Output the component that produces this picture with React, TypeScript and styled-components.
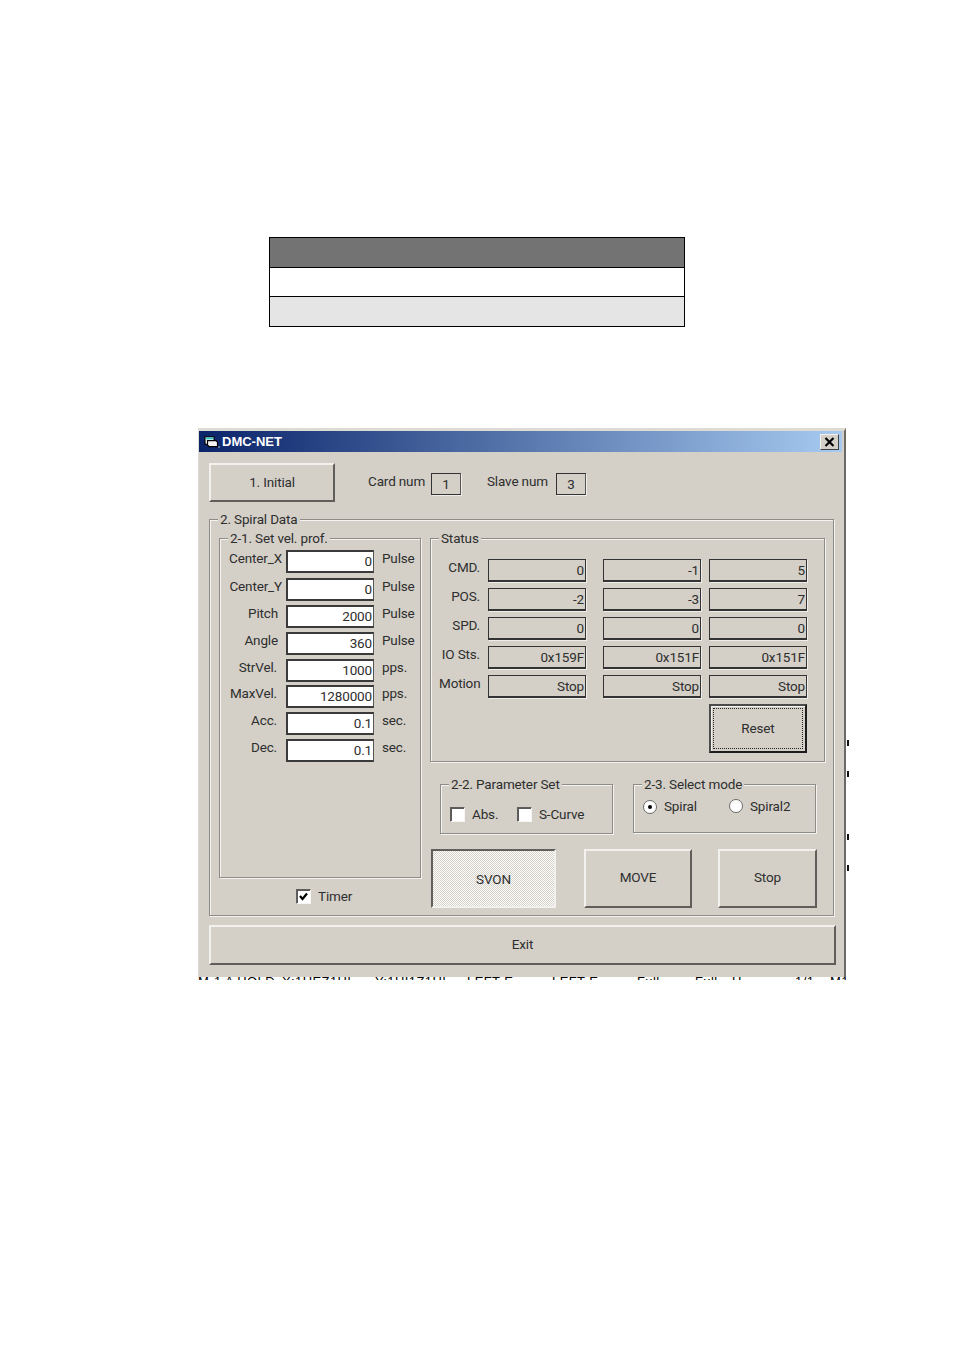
import React from "react";
import styled, {createGlobalStyle} from "styled-components";

const GlobalStyle = createGlobalStyle`
  html, body {
    margin: 0;
    padding: 0;
    background: #fff;
  }
  body {
    font-family: Roboto, "Liberation Sans", Arial, sans-serif;
    font-size: 13.5px;
    letter-spacing: -0.15px;
    color: #2e2e2e;
  }
`;

const Page = styled.div`
  width: 954px;
  height: 1350px;
  padding: 237px 0 0 198px;
  box-sizing: border-box;
  overflow: hidden;
`;

const TableBox = styled.div`
  width: 416px;
  margin-left: 71px;
  border: 1px solid #000;
  box-sizing: border-box;
  background: #fff;
`;

const TableRow = styled.div<{ $bg: string; $h: number }>`
  height: ${p => p.$h}px;
  background: ${p => p.$bg};
  & + & {
    border-top: 1px solid #000;
  }
`;

const DialogWrap = styled.div`
  position: relative;
  margin-top: 101px;
  width: 650px;
`;

const Dialog = styled.div`
  width: 648px;
  height: 549px;
  box-sizing: border-box;
  background: #d4d0c8;
  border-top: 3px solid #dedbd5;
  border-right: 2px solid #6b6a67;
  border-left: 1px solid #dedbd5;
`;

const TitleBar = styled.div`
  height: 21px;
  margin-right: 2px;
  background: linear-gradient(90deg, #0a246a, #a6caf0);
  display: flex;
  align-items: center;
  padding: 0 3px 0 5px;
  gap: 2px;
  color: #fff;
  font-family: "Liberation Sans", Arial, sans-serif;
  font-weight: bold;
  font-size: 13px;
  letter-spacing: 0;
`;

const CloseButton = styled.div`
  margin-left: auto;
  width: 19px;
  height: 16px;
  background: #d4d0c8;
  border: 1px solid;
  border-color: #f2f1ee #404040 #404040 #f2f1ee;
  box-sizing: border-box;
  display: flex;
  align-items: center;
  justify-content: center;
`;

const Content = styled.div`
  padding: 11px 0 0 10px;
`;

const TopRow = styled.div`
  display: flex;
  height: 39px;
`;

const Button = styled.div<{ $w: number; $h: number; $ml?: number; $mt?: number; $pb?: number }>`
  width: ${p => p.$w}px;
  height: ${p => p.$h}px;
  margin-left: ${p => p.$ml || 0}px;
  margin-top: ${p => p.$mt || 0}px;
  padding-bottom: ${p => p.$pb ?? 2}px;
  box-sizing: border-box;
  display: flex;
  align-items: center;
  justify-content: center;
  background: #d4d0c8;
  border-top: 2px solid #f2f1ee;
  border-left: 2px solid #f2f1ee;
  border-right: 2px solid #5f5e5b;
  border-bottom: 2px solid #5f5e5b;
`;

const ToggledButton = styled(Button)`
  border-top-color: #5f5e5b;
  border-left-color: #5f5e5b;
  border-right-color: #f2f1ee;
  border-bottom-color: #f2f1ee;
  background: repeating-conic-gradient(#fff 0 25%, #d4d0c8 0 50%) 0 0 / 2px 2px;
  padding-top: 2px;
`;

const DefaultButton = styled(Button)`
  border: 2px solid #1c1c1c;
  border-top-color: #4b4b4b;
  border-left-color: #4b4b4b;
  box-shadow: inset 1px 1px 0 #f2f1ee;
  padding: 2px;
`;

const FocusRing = styled.div`
  width: 100%;
  height: 100%;
  box-sizing: border-box;
  padding-bottom: 2px;
  border: 1px dotted #222;
  display: flex;
  align-items: center;
  justify-content: center;
`;

const InlineLabel = styled.div<{ $ml: number; $w: number }>`
  width: ${p => p.$w}px;
  margin-left: ${p => p.$ml}px;
  margin-top: 10px;
  white-space: nowrap;
`;

const ValueBox = styled.div`
  width: 30px;
  height: 22px;
  margin-top: 10px;
  box-sizing: border-box;
  border: 1px solid #333;
  border-right-color: #555;
  box-shadow: 1px 1px 0 #efeeea;
  display: flex;
  align-items: center;
  justify-content: center;
`;

const Group = styled.div<{ $w: number; $h: number; $mt?: number; $ml?: number }>`
  position: relative;
  width: ${p => p.$w}px;
  height: ${p => p.$h}px;
  margin-top: ${p => p.$mt || 0}px;
  margin-left: ${p => p.$ml || 0}px;
  box-sizing: border-box;
  border: 1px solid #8e8c87;
  box-shadow: 1px 1px 0 #f4f3f0, inset 1px 1px 0 #f4f3f0;
`;

const Legend = styled.div<{ $left: number }>`
  position: absolute;
  top: -9px;
  left: ${p => p.$left}px;
  padding: 0 2px;
  line-height: 17px;
  background: #d4d0c8;
  white-space: nowrap;
`;

const SpiralBody = styled.div`
  display: grid;
  grid-template-columns: 202px 395px;
  column-gap: 9px;
  padding: 18px 0 0 9px;
`;

const ParamGrid = styled.div`
  display: grid;
  grid-template-columns: 62px 88px auto;
  grid-template-rows: 28px 27px 27px 27px 26px 27px 27px 23px;
  column-gap: 4px;
  padding-top: 11px;
`;

const ParamLabel = styled.div<{ $pr: number }>`
  text-align: right;
  padding-right: ${p => p.$pr}px;
  line-height: 17px;
  white-space: nowrap;
`;

const Input = styled.div`
  height: 23px;
  box-sizing: border-box;
  background: #fff;
  border: 2px solid #3a3a3a;
  border-right: 1px solid #555;
  text-align: right;
  padding-right: 1px;
  line-height: 18px;
`;

const Unit = styled.div`
  padding-left: 4px;
  line-height: 17px;
`;

const TimerRow = styled.div`
  display: flex;
  align-items: center;
  gap: 7px;
  margin: 10px 0 0 77px;
`;

const CheckBox = styled.div`
  width: 15px;
  height: 15px;
  flex: none;
  box-sizing: border-box;
  background: #fff;
  border: 1px solid;
  border-color: #5f5e5b #f7f6f4 #f7f6f4 #5f5e5b;
  box-shadow: inset 1px 1px 0 #5a5a5a;
  display: flex;
  align-items: center;
  justify-content: center;
`;

const StatusGrid = styled.div`
  display: grid;
  grid-template-columns: 49px 98px 115px 106px;
  grid-template-rows: repeat(5, 29px);
  padding: 20px 0 0 8px;
`;

const StatusLabel = styled.div`
  text-align: right;
  padding-right: 8px;
  line-height: 17px;
  white-space: nowrap;
`;

const StatusBox = styled.div<{ $ml: number }>`
  height: 23px;
  width: 98px;
  box-sizing: border-box;
  margin-left: ${p => p.$ml}px;
  border: 1px solid #333;
  border-bottom-width: 2px;
  box-shadow: 1px 1px 0 #efeeea;
  text-align: right;
  padding-right: 1px;
  line-height: 21px;
`;

const ResetRow = styled.div`
  display: flex;
  justify-content: flex-end;
  padding-right: 17px;
`;

const OptionRow = styled.div`
  display: flex;
  align-items: flex-start;
  gap: 20px;
  margin: 22px 0 0 10px;
`;

const OptionLine = styled.div<{ $pt: number }>`
  display: flex;
  padding: ${p => p.$pt}px 0 0 9px;
`;

const OptionItem = styled.div<{ $w: number; $mt?: number }>`
  display: flex;
  align-items: center;
  gap: 7px;
  width: ${p => p.$w}px;
  margin-top: ${p => p.$mt || 0}px;
  line-height: 17px;
  white-space: nowrap;
`;

const Radio = styled.div<{ $on?: boolean }>`
  width: 14px;
  height: 14px;
  flex: none;
  box-sizing: border-box;
  border-radius: 50%;
  background: #fff;
  border: 1px solid #6a6a6a;
  display: flex;
  align-items: center;
  justify-content: center;
  &::after {
    content: "";
    display: ${p => (p.$on ? "block" : "none")};
    width: 4px;
    height: 4px;
    border-radius: 50%;
    background: #000;
  }
`;

const ActionRow = styled.div`
  display: flex;
  margin-top: 15px;
`;

const ClippedStrip = styled.div`
  display: flex;
  height: 3px;
  width: 650px;
  overflow: hidden;
  font-family: "Liberation Sans", Arial, sans-serif;
  font-size: 13px;
  line-height: 15px;
  letter-spacing: 0.4px;
  color: #000;
  white-space: nowrap;
`;

const StripWord = styled.span<{ $w: number }>`
  flex: none;
  width: ${p => p.$w}px;
  margin-top: -3px;
`;

const Tick = styled.div<{ $top: number }>`
  position: absolute;
  left: 649px;
  top: ${p => p.$top}px;
  width: 2px;
  height: 6px;
  background: #111;
`;

const params = [
    {label: "Center_X", pr: 0, value: "0", unit: "Pulse"},
    {label: "Center_Y", pr: 0, value: "0", unit: "Pulse"},
    {label: "Pitch", pr: 4, value: "2000", unit: "Pulse"},
    {label: "Angle", pr: 4, value: "360", unit: "Pulse"},
    {label: "StrVel.", pr: 5, value: "1000", unit: "pps."},
    {label: "MaxVel.", pr: 5, value: "1280000", unit: "pps."},
    {label: "Acc.", pr: 5, value: "0.1", unit: "sec."},
    {label: "Dec.", pr: 5, value: "0.1", unit: "sec."},
];

const status = [
    {label: "CMD.", values: ["0", "-1", "5"]},
    {label: "POS.", values: ["-2", "-3", "7"]},
    {label: "SPD.", values: ["0", "0", "0"]},
    {label: "IO Sts.", values: ["0x159F", "0x151F", "0x151F"]},
    {label: "Motion", values: ["Stop", "Stop", "Stop"]},
];

const boxOffsets = [0, 17, 8];

const stripWords = [
    {text: "M-1 A HOLD", w: 84},
    {text: "X:1HEZ1HI", w: 93},
    {text: "Y:1HI1Z1HI", w: 92},
    {text: "LEFT E", w: 85},
    {text: "LEFT E", w: 85},
    {text: "Full", w: 58},
    {text: "Full", w: 37},
    {text: "H", w: 63},
    {text: "1/1", w: 35},
    {text: "M1", w: 18},
];

const WindowIcon = () => (
    <svg width="16" height="12" viewBox="0 0 16 12">
        <rect x="1" y="0.8" width="9" height="7.5" fill="#fff" stroke="#000" strokeWidth="1.2"/>
        <rect x="1.6" y="1.4" width="7.8" height="2" fill="#35c4c4"/>
        <path d="M3.5 4.6H12L13.5 6.2V10.6H5L3.5 9z" fill="#f4f4f4" stroke="#000" strokeWidth="1.2"/>
        <path d="M14 10.5h2v1h-2z" fill="#aab4c8"/>
    </svg>
);

const CloseIcon = () => (
    <svg width="11" height="10" viewBox="0 0 11 10">
        <path d="M1.5 1L9.5 9M9.5 1L1.5 9" stroke="#000" strokeWidth="2.2"/>
    </svg>
);

const CheckIcon = () => (
    <svg width="11" height="11" viewBox="0 0 11 11">
        <path d="M2 5L4.5 8L9 2.5" fill="none" stroke="#000" strokeWidth="2.2"/>
    </svg>
);

const App: React.FC = () => {
    return (
        <>
            <GlobalStyle/>
            <Page>
                <TableBox>
                    <TableRow $bg="#737373" $h={29}/>
                    <TableRow $bg="#fff" $h={28}/>
                    <TableRow $bg="#e5e5e5" $h={29}/>
                </TableBox>
                <DialogWrap>
                    <Dialog>
                        <TitleBar>
                            <WindowIcon/>
                            DMC-NET
                            <CloseButton><CloseIcon/></CloseButton>
                        </TitleBar>
                        <Content>
                            <TopRow>
                                <Button $w={126} $h={39}>1. Initial</Button>
                                <InlineLabel $ml={33} $w={63}>Card num</InlineLabel>
                                <ValueBox>1</ValueBox>
                                <InlineLabel $ml={26} $w={69}>Slave num</InlineLabel>
                                <ValueBox>3</ValueBox>
                            </TopRow>
                            <Group $w={625} $h={397} $mt={17}>
                                <Legend $left={8}>2. Spiral Data</Legend>
                                <SpiralBody>
                                    <div>
                                        <Group $w={202} $h={340}>
                                            <Legend $left={8}>2-1. Set vel. prof.</Legend>
                                            <ParamGrid>
                                                {params.map(item => (
                                                    <React.Fragment key={item.label}>
                                                        <ParamLabel $pr={item.pr}>{item.label}</ParamLabel>
                                                        <Input>{item.value}</Input>
                                                        <Unit>{item.unit}</Unit>
                                                    </React.Fragment>
                                                ))}
                                            </ParamGrid>
                                        </Group>
                                        <TimerRow>
                                            <CheckBox><CheckIcon/></CheckBox>
                                            Timer
                                        </TimerRow>
                                    </div>
                                    <div>
                                        <Group $w={395} $h={224}>
                                            <Legend $left={8}>Status</Legend>
                                            <StatusGrid>
                                                {status.map(row => (
                                                    <React.Fragment key={row.label}>
                                                        <StatusLabel>{row.label}</StatusLabel>
                                                        {row.values.map((v, i) => (
                                                            <StatusBox key={i} $ml={boxOffsets[i]}>{v}</StatusBox>
                                                        ))}
                                                    </React.Fragment>
                                                ))}
                                            </StatusGrid>
                                            <ResetRow>
                                                <DefaultButton $w={98} $h={49}>
                                                    <FocusRing>Reset</FocusRing>
                                                </DefaultButton>
                                            </ResetRow>
                                        </Group>
                                        <OptionRow>
                                            <Group $w={173} $h={50}>
                                                <Legend $left={8}>2-2. Parameter Set</Legend>
                                                <OptionLine $pt={21}>
                                                    <OptionItem $w={67}><CheckBox/>Abs.</OptionItem>
                                                    <OptionItem $w={80}><CheckBox/>S-Curve</OptionItem>
                                                </OptionLine>
                                            </Group>
                                            <Group $w={183} $h={49}>
                                                <Legend $left={8}>2-3. Select mode</Legend>
                                                <OptionLine $pt={13}>
                                                    <OptionItem $w={86}><Radio $on/>Spiral</OptionItem>
                                                    <OptionItem $w={70} $mt={-1}><Radio/>Spiral2</OptionItem>
                                                </OptionLine>
                                            </Group>
                                        </OptionRow>
                                        <ActionRow>
                                            <ToggledButton $w={125} $h={59} $ml={1}>SVON</ToggledButton>
                                            <Button $w={108} $h={59} $ml={28} $pb={4}>MOVE</Button>
                                            <Button $w={99} $h={59} $ml={26} $pb={4}>Stop</Button>
                                        </ActionRow>
                                    </div>
                                </SpiralBody>
                            </Group>
                            <Button $w={627} $h={40} $mt={9}>Exit</Button>
                        </Content>
                    </Dialog>
                    <ClippedStrip>
                        {stripWords.map((word, i) => (
                            <StripWord key={i} $w={word.w}>{word.text}</StripWord>
                        ))}
                    </ClippedStrip>
                    <Tick $top={312}/>
                    <Tick $top={343}/>
                    <Tick $top={406}/>
                    <Tick $top={437}/>
                </DialogWrap>
            </Page>
        </>
    );
}

export default App;
